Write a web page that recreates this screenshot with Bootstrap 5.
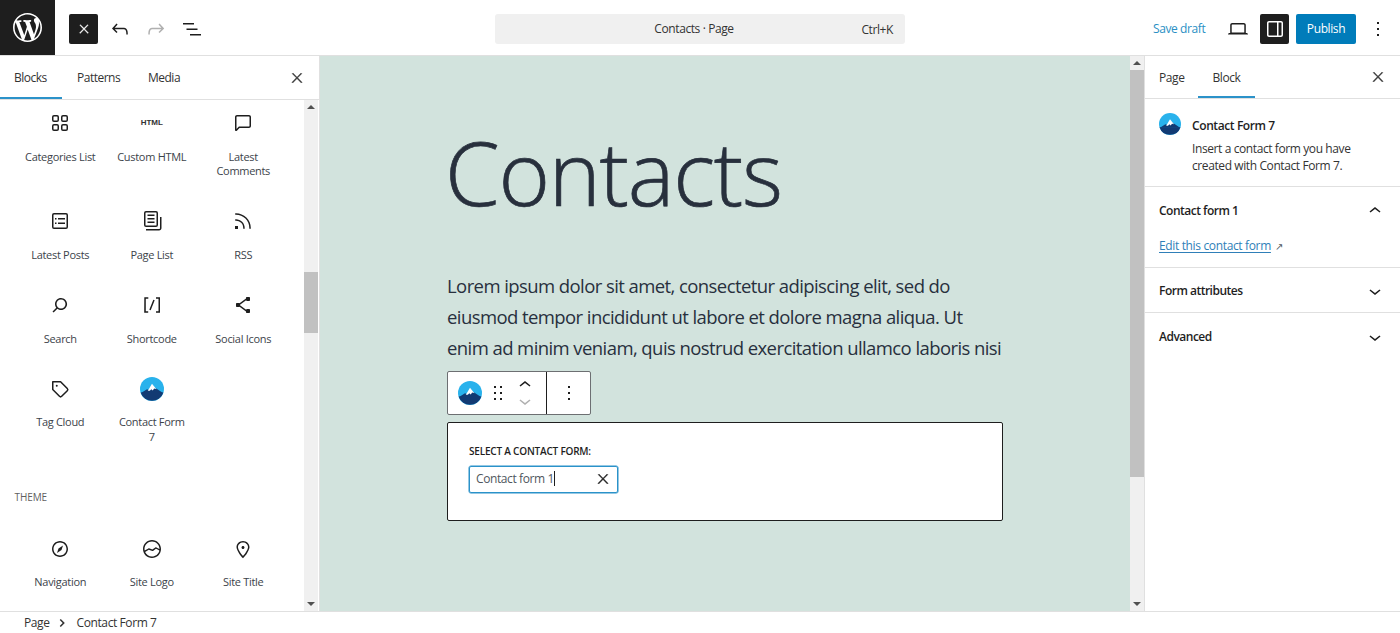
<!DOCTYPE html>
<html lang="en"><head><meta charset="utf-8"><title>Contacts</title>
<link href="https://cdn.jsdelivr.net/npm/bootstrap@5.3.0/dist/css/bootstrap.min.css" rel="stylesheet">
<style>
html,body{height:633px;overflow:hidden}
body{font-family:"Open Sans","Noto Sans",sans-serif;font-size:12px;color:#1e1e1e;background:#fff;letter-spacing:-.4px}
svg{fill:currentColor;display:block;flex:none}
#i-x{stroke:currentColor;stroke-width:.7}
.wp-shell{height:633px}
.wp-top{height:56px;border-bottom:1px solid #e0e0e0;flex:none}
.wp-logo{width:55px;height:55px;background:#1e1e1e;color:#fff}
.wp-dark{width:29px;height:30px;background:#1e1e1e;color:#fff;border-radius:2px}
.wp-left-tools{width:440px;padding-left:14px;margin-top:13.5px}
.wp-ic{width:36px;height:30px;color:#1e1e1e}
.wp-ic-off{color:#b0b0b0}
.wp-search{width:410px;height:30px;background:#f0f0f0;border-radius:3px;position:relative;color:#333;margin-top:13.5px}
.wp-search-title{flex:1;text-align:center;padding-right:12px}
.wp-kbd{position:absolute;right:12px;top:7px}
.wp-right-tools{margin-left:auto;padding-right:10px;margin-top:13.5px}
.wp-save{color:#2a8fc4;width:53px;margin-right:20px;white-space:nowrap}
.wp-lap{margin-right:10px}
.wp-pub{width:60px;height:30px;background:#007cba;color:#fff;border-radius:2px;margin-left:7px}
.wp-more{margin-left:10px}
.wp-main{flex:1;min-height:0}
.wp-left{width:320px;border-right:1px solid #e0e0e0;flex:none}
.wp-tabs{height:44px;border-bottom:1px solid #e0e0e0;flex:none;position:relative;color:#333;letter-spacing:-.5px}
.wp-tab{padding:0 0 0 14px;height:43px}
.wp-tab-on{box-shadow:inset 0 -2px 0 #2b92c9;width:62px}
.wp-tab-p{padding-left:15px;width:71px}
.wp-tab-m{padding-left:15px}
.wp-tabx{margin-left:auto;margin-right:14px;height:43px}
.wp-scrollwrap{flex:1;min-height:0}
.wp-ins{flex:1;min-width:0;overflow:hidden;padding:11px 0 0 14.5px}
.wp-grid{display:grid;grid-template-columns:repeat(3,91.5px);row-gap:30.5px}
.wp-tile{text-align:center;color:#3c434a;line-height:14.7px;padding:0 10px;font-size:11px;letter-spacing:-.3px}
.wp-tile-i{height:24px;margin-bottom:14.5px;color:#1e1e1e}
.wp-html{font-family:"Liberation Sans",sans-serif;font-weight:700;font-size:8px;letter-spacing:0;color:#333}
.wp-theme{font-size:10px;font-weight:500;color:#5f5f5f;margin:45px 0 33px;letter-spacing:-.1px;line-height:14px}
.wp-sb{width:14px;background:#f0f0f0;flex:none;margin-right:1px}
.wp-sb-r{margin-right:0}
.wp-arrow{height:14px;flex:none}
.wp-up{border:0 solid transparent;border-width:0 4px 4px;border-bottom-color:#505050;width:0;height:0}
.wp-down{border:0 solid transparent;border-width:4px 4px 0;border-top-color:#505050;width:0;height:0}
.wp-thumb{background:#c1c1c1}
.wp-thumb-l{height:61px;margin-top:158px}
.wp-thumb-r{height:407px}
.wp-canvas{flex:1;background:#d2e3dd;padding:0 0 0 127px;color:#28303d;overflow:hidden;min-width:0}
.wp-h{font-size:88px;font-weight:300;line-height:125px;margin:54px 0 0 -2px;letter-spacing:-1.2px;-webkit-text-stroke:.7px #28303d}
.wp-p{font-size:18.5px;line-height:31.2px;margin:35px 0 0;width:556px;letter-spacing:-.58px}
.wp-toolbar{width:144px;height:44px;background:#fff;border:1px solid #6d6f72;border-radius:2px;margin-top:7px;color:#1e1e1e}
.wp-tb-a{width:99px;border-right:1px solid #1e1e1e;height:100%;padding-left:10px}
.wp-drag{margin-left:4px}
.wp-tb-b{flex:1}
.wp-mover{width:24px;margin-left:3px}
.wp-mdown{margin-top:-4px}
.wp-form{width:556px;height:99px;background:#fff;border:1px solid #1e1e1e;border-radius:2px;margin-top:7px;padding:21px 21px 0;color:#1e1e1e}
.wp-form-l{font-size:10px;font-weight:600;text-transform:uppercase;line-height:15px;margin-bottom:7px;letter-spacing:-.2px}
.wp-input{width:149px;height:27px;border:1px solid #2b92c9;box-shadow:0 0 0 .5px #2b92c9;border-radius:2px;padding:0 6px;color:#50575e}
.wp-caret{display:inline-block;width:1px;height:15px;background:#1e1e1e;vertical-align:-3px}
.wp-input svg{margin-left:auto;color:#1e1e1e}
.wp-right{flex:none;width:256px;border-left:1px solid #e0e0e0}
.wp-rtabs{height:43px;border-bottom:1px solid #e0e0e0;color:#333}
.wp-rt1{padding:1px 0 0 14px;width:53px;height:42px}
.wp-rt2{width:57px;height:42px;padding-top:1px;justify-content:center;box-shadow:inset 0 -2px 0 #2b92c9}
.wp-rx{margin-right:14px;height:42px}
.wp-card{height:88px;border-bottom:1px solid #e0e0e0;padding:14px 14px 0;gap:11px}
.wp-card-t{font-weight:600;line-height:18px;color:#1e1e1e;margin-top:4px}
.wp-card-d{line-height:17px;color:#333;margin-top:5px}
.wp-pan{height:45px;padding:2px 13px 0 14px;font-weight:600;border-bottom:1px solid #e0e0e0;color:#1e1e1e;letter-spacing:-.5px}
.wp-pan-open{height:81px;display:block;padding-top:0}
.wp-pan-h{height:47px}
.wp-pan-b{margin-top:3px;letter-spacing:-.35px}
.wp-link{color:#2f7fb8;font-weight:400;text-decoration:underline;text-underline-offset:2px}
.wp-ext{font-size:10px;font-weight:400;color:#50575e;margin-left:4px}
.wp-foot{height:22px;border-top:1px solid #e0e0e0;padding-left:24px;color:#333;flex:none}
.wp-foot svg{margin:0 7px 0 4px}
</style></head>
<body>
<svg width="0" height="0" class="position-absolute"><defs>
<g id="i-cf7"><circle cx="12" cy="12" r="12" fill="#29b2ec"/><path d="M.6 15.5a12 12 0 0 0 22.8 0z" fill="#123a73"/><path d="M1 16 7 12.2 9 13 12 8 15 11 17 12 23 16z" fill="#123a73"/><path d="M7.8 13.8 12 6.8l4.4 5.4-2.2-.6-1.5 2-1.4-1.4-1.5 1.6z" fill="#fff"/></g>
<path id="i-x" d="M13 11.8l6.1-6.3-1-1-6.1 6.2-6.1-6.2-1 1 6.1 6.3-6.5 6.7 1 1 6.5-6.6 6.5 6.6 1-1z"/>
<path id="i-up" d="M6.5 12.4L12 8l5.5 4.4-.9 1.2L12 10l-4.5 3.6-1-1.2z"/>
<path id="i-down" d="M17.5 11.6L12 16l-5.5-4.4.9-1.2L12 14l4.5-3.6 1 1.2z"/>
<path id="i-more" d="M13 19h-2v-2h2v2zm0-6h-2v-2h2v2zm0-6h-2V5h2v2z"/>
</defs></svg>
<div class="wp-shell d-flex flex-column">
 <header class="wp-top d-flex align-items-start">
  <div class="wp-logo d-flex align-items-center justify-content-center"><svg width="29" height="29" viewBox="0 0 20 20"><path d="M20 10c0-5.51-4.49-10-10-10C4.48 0 0 4.49 0 10c0 5.52 4.48 10 10 10 5.51 0 10-4.48 10-10zM7.78 15.37L4.37 6.22c.55-.02 1.17-.08 1.17-.08.5-.06.44-1.13-.06-1.11 0 0-1.45.11-2.37.11-.18 0-.37 0-.58-.01C4.12 2.69 6.87 1.11 10 1.11c2.33 0 4.45.87 6.05 2.34-.68-.11-1.65.39-1.65 1.58 0 .74.45 1.36.9 2.1.35.61.55 1.36.55 2.46 0 1.49-1.4 5-1.4 5l-3.03-8.37c.54-.02.82-.17.82-.17.5-.05.44-1.25-.06-1.22 0 0-1.44.12-2.38.12-.87 0-2.33-.12-2.33-.12-.5-.03-.56 1.2-.06 1.22l.92.08 1.26 3.41zM17.41 10c.24-.64.74-1.87.43-4.25.7 1.29 1.05 2.71 1.05 4.25 0 3.29-1.73 6.24-4.4 7.78.97-2.59 1.94-5.2 2.92-7.78zM6.1 18.09C3.12 16.65 1.11 13.53 1.11 10c0-1.3.23-2.48.72-3.59C3.25 10.3 4.67 14.2 6.1 18.09zm4.03-6.63l2.58 6.98c-.86.29-1.76.45-2.71.45-.79 0-1.57-.11-2.29-.33.81-2.38 1.62-4.74 2.42-7.1z"/></svg></div>
  <div class="wp-left-tools d-flex align-items-center">
   <div class="wp-dark d-flex align-items-center justify-content-center me-1"><svg width="14" height="14" viewBox="0 0 24 24"><use href="#i-x"/></svg></div>
   <div class="wp-ic d-flex align-items-center justify-content-center"><svg width="24" height="24" viewBox="0 0 24 24"><path d="M18.3 11.7c-.6-.6-1.4-.9-2.3-.9H6.7l2.9-3.3-1.1-1-4.5 5L8.5 16l1-1-2.7-2.7H16c.5 0 .9.2 1.3.5 1 1 1 3.4 1 4.5v.3h1.5v-.2c0-1.5 0-4.3-1.5-5.7z"/></svg></div>
   <div class="wp-ic wp-ic-off d-flex align-items-center justify-content-center"><svg width="24" height="24" viewBox="0 0 24 24"><path d="M15.6 6.5l-1.1 1 2.9 3.3H8c-.9 0-1.7.3-2.3.9-1.4 1.5-1.4 4.2-1.4 5.6v.2h1.5v-.3c0-1.1 0-3.5 1-4.5.3-.3.7-.5 1.3-.5h9.2L14.5 15l1.1 1.1 4.6-4.6-4.6-5z"/></svg></div>
   <div class="wp-ic d-flex align-items-center justify-content-center"><svg width="24" height="24" viewBox="0 0 24 24"><path d="M3 6h11v1.5H3V6zm3.5 5.5h11V13h-11v-1.5zM21 17H10v1.5h11V17z"/></svg></div>
  </div>
  <div class="wp-search d-flex align-items-center"><span class="wp-search-title">Contacts · Page</span><span class="wp-kbd">Ctrl+K</span></div>
  <div class="wp-right-tools d-flex align-items-center">
   <span class="wp-save">Save draft</span>
   <div class="d-flex align-items-center justify-content-center wp-lap"><svg width="24" height="24" viewBox="0 0 24 24"><path d="M20.5 16h-.7V8c0-1.1-.9-2-2-2H6.2c-1.1 0-2 .9-2 2v8h-.7c-.8 0-1.5.7-1.5 1.5h20c0-.8-.7-1.5-1.5-1.5zM5.7 8c0-.3.2-.5.5-.5h11.6c.3 0 .5.2.5.5v7.6H5.7V8z"/></svg></div>
   <div class="wp-dark d-flex align-items-center justify-content-center"><svg width="24" height="24" viewBox="0 0 24 24"><path d="M18 4H6c-1.1 0-2 .9-2 2v12c0 1.1.9 2 2 2h12c1.1 0 2-.9 2-2V6c0-1.1-.9-2-2-2zm-4 14.5H6c-.3 0-.5-.2-.5-.5V6c0-.3.2-.5.5-.5h8v13zm4.5-.5c0 .3-.2.5-.5.5h-2.5v-13H18c.3 0 .5.2.5.5v12z"/></svg></div>
   <div class="wp-pub d-flex align-items-center justify-content-center">Publish</div>
   <svg class="wp-more" width="24" height="24" viewBox="0 0 24 24"><use href="#i-more"/></svg>
  </div>
 </header>
 <main class="wp-main d-flex">
  <aside class="wp-left d-flex flex-column">
   <div class="wp-tabs d-flex align-items-start">
    <div class="wp-tab wp-tab-on d-flex align-items-center">Blocks</div>
    <div class="wp-tab wp-tab-p d-flex align-items-center">Patterns</div>
    <div class="wp-tab wp-tab-m d-flex align-items-center">Media</div>
    <div class="wp-tabx d-flex align-items-center"><svg width="16" height="16" viewBox="0 0 24 24"><use href="#i-x"/></svg></div>
   </div>
   <div class="wp-scrollwrap d-flex">
    <div class="wp-ins">
     <div class="wp-grid">
      <div class="wp-tile"><div class="wp-tile-i d-flex justify-content-center"><svg width="24" height="24" viewBox="0 0 24 24"><path fill-rule="evenodd" d="M6 5.5h3a.5.5 0 01.5.5v3a.5.5 0 01-.5.5H6a.5.5 0 01-.5-.5V6a.5.5 0 01.5-.5zM4 6a2 2 0 012-2h3a2 2 0 012 2v3a2 2 0 01-2 2H6a2 2 0 01-2-2V6zm11-.5h3a.5.5 0 01.5.5v3a.5.5 0 01-.5.5h-3a.5.5 0 01-.5-.5V6a.5.5 0 01.5-.5zM13 6a2 2 0 012-2h3a2 2 0 012 2v3a2 2 0 01-2 2h-3a2 2 0 01-2-2V6zm5 8.5h-3a.5.5 0 00-.5.5v3a.5.5 0 00.5.5h3a.5.5 0 00.5-.5v-3a.5.5 0 00-.5-.5zM15 13a2 2 0 00-2 2v3a2 2 0 002 2h3a2 2 0 002-2v-3a2 2 0 00-2-2h-3zm-9 1.5h3a.5.5 0 01.5.5v3a.5.5 0 01-.5.5H6a.5.5 0 01-.5-.5v-3a.5.5 0 01.5-.5zM4 15a2 2 0 012-2h3a2 2 0 012 2v3a2 2 0 01-2 2H6a2 2 0 01-2-2v-3z"/></svg></div><div class="text-nowrap">Categories List</div></div>
      <div class="wp-tile"><div class="wp-tile-i d-flex justify-content-center align-items-center"><span class="wp-html">HTML</span></div><div class="text-nowrap">Custom HTML</div></div>
      <div class="wp-tile"><div class="wp-tile-i d-flex justify-content-center"><svg width="24" height="24" viewBox="0 0 24 24"><path d="M18 4H6c-1.1 0-2 .9-2 2v12.9c0 .6.5 1.1 1.1 1.1.3 0 .5-.1.8-.3L8.5 17H18c1.1 0 2-.9 2-2V6c0-1.1-.9-2-2-2zm.5 11c0 .3-.2.5-.5.5H7.9l-2.4 2.4V6c0-.3.2-.5.5-.5h12c.3 0 .5.2.5.5v9z"/></svg></div><div>Latest Comments</div></div>
      <div class="wp-tile"><div class="wp-tile-i d-flex justify-content-center"><svg width="24" height="24" viewBox="0 0 24 24"><path fill-rule="evenodd" d="M18 5.5H6a.5.5 0 00-.5.5v12a.5.5 0 00.5.5h12a.5.5 0 00.5-.5V6a.5.5 0 00-.5-.5zM6 4h12a2 2 0 012 2v12a2 2 0 01-2 2H6a2 2 0 01-2-2V6a2 2 0 012-2zm1 5h1.5v1.5H7V9zm1.5 4.5H7V15h1.5v-1.5zM10 9h7v1.5h-7V9zm7 4.5h-7V15h7v-1.5z"/></svg></div><div class="text-nowrap">Latest Posts</div></div>
      <div class="wp-tile"><div class="wp-tile-i d-flex justify-content-center"><svg width="24" height="24" viewBox="0 0 24 24"><path d="M14.5 5.5h-7V7h7V5.5ZM7.5 9h7v1.5h-7V9Zm7 3.5h-7V14h7v-1.5Z"/><path d="M16 2H6a2 2 0 0 0-2 2v12a2 2 0 0 0 2 2h10a2 2 0 0 0 2-2V4a2 2 0 0 0-2-2ZM6 3.5h10a.5.5 0 0 1 .5.5v12a.5.5 0 0 1-.5.5H6a.5.5 0 0 1-.5-.5V4a.5.5 0 0 1 .5-.5Z"/><path d="M20 8v11c0 .69-.31 1-.999 1H6v1.5h13.001c1.52 0 2.499-.982 2.499-2.5V8H20Z"/></svg></div><div class="text-nowrap">Page List</div></div>
      <div class="wp-tile"><div class="wp-tile-i d-flex justify-content-center"><svg width="24" height="24" viewBox="0 0 24 24"><path d="M5 10.2h-.8v1.5H5c1.9 0 3.8.8 5.1 2.1 1.4 1.4 2.1 3.2 2.1 5.1v.8h1.5V19c0-2.3-.9-4.5-2.6-6.2-1.6-1.6-3.8-2.6-6.1-2.6zm10.4-1.6C12.6 5.8 8.9 4.2 5 4.2h-.8v1.5H5c3.5 0 6.9 1.4 9.4 3.9s3.9 5.8 3.9 9.4v.8h1.5V19c0-3.9-1.6-7.6-4.4-10.4zM4 20h3v-3H4v3z"/></svg></div><div>RSS</div></div>
      <div class="wp-tile"><div class="wp-tile-i d-flex justify-content-center"><svg width="24" height="24" viewBox="0 0 24 24"><path d="M13 5c-3.3 0-6 2.7-6 6 0 1.4.5 2.7 1.3 3.7l-3.8 3.8 1.1 1.1 3.8-3.8c1 .8 2.3 1.3 3.7 1.3 3.3 0 6-2.7 6-6S16.3 5 13 5zm0 10.5c-2.5 0-4.5-2-4.5-4.5s2-4.5 4.5-4.5 4.5 2 4.5 4.5-2 4.5-4.5 4.5z"/></svg></div><div>Search</div></div>
      <div class="wp-tile"><div class="wp-tile-i d-flex justify-content-center"><svg width="24" height="24" viewBox="0 0 24 24"><path d="M16 4.2v1.5h2.5v12.5H16v1.5h4V4.2h-4zM4.2 19.8h4v-1.5H5.8V5.8h2.5V4.2h-4l-.1 15.6zm5.1-3.1l1.4.6 4-10-1.4-.6-4 10z"/></svg></div><div>Shortcode</div></div>
      <div class="wp-tile"><div class="wp-tile-i d-flex justify-content-center"><svg width="24" height="24" viewBox="0 0 24 24"><path d="M9 11.8l6.1-4.5c.1.4.4.7.9.7h2c.6 0 1-.4 1-1V5c0-.6-.4-1-1-1h-2c-.6 0-1 .4-1 1v.4l-6.4 4.8c-.2-.1-.4-.2-.6-.2H6c-.6 0-1 .4-1 1v2c0 .6.4 1 1 1h2c.2 0 .4-.1.6-.2l6.4 4.8v.4c0 .6.4 1 1 1h2c.6 0 1-.4 1-1v-2c0-.6-.4-1-1-1h-2c-.5 0-.8.3-.9.7L9 12.2v-.4z"/></svg></div><div class="text-nowrap">Social Icons</div></div>
      <div class="wp-tile"><div class="wp-tile-i d-flex justify-content-center"><svg width="24" height="24" viewBox="0 0 24 24"><path d="M4.75 4a.75.75 0 0 0-.75.75v7.826c0 .2.08.39.22.53l6.72 6.716a2.313 2.313 0 0 0 3.276-.001l5.61-5.611-.531-.53.532.528a2.315 2.315 0 0 0 0-3.264L13.104 4.22a.75.75 0 0 0-.53-.22H4.75ZM19 12.576a.815.815 0 0 1-.236.574l-5.61 5.611a.814.814 0 0 1-1.153 0L5.5 12.264V5.5h6.763l6.5 6.502a.816.816 0 0 1 .237.574ZM8.75 9.75a1 1 0 1 0 0-2 1 1 0 0 0 0 2Z"/></svg></div><div>Tag Cloud</div></div>
      <div class="wp-tile"><div class="wp-tile-i d-flex justify-content-center"><svg width="24" height="24" viewBox="0 0 24 24"><use href="#i-cf7"/></svg></div><div>Contact Form<br>7</div></div>
     </div>
     <div class="wp-theme">THEME</div>
     <div class="wp-grid">
      <div class="wp-tile"><div class="wp-tile-i d-flex justify-content-center"><svg width="24" height="24" viewBox="0 0 24 24"><path d="M12 4c-4.4 0-8 3.6-8 8s3.6 8 8 8 8-3.6 8-8-3.6-8-8-8zm0 14.5c-3.6 0-6.5-2.9-6.5-6.5S8.4 5.5 12 5.5s6.5 2.9 6.5 6.5-2.9 6.5-6.5 6.5zM9 16l4.5-3L15 8.4l-4.5 3L9 16z"/></svg></div><div>Navigation</div></div>
      <div class="wp-tile"><div class="wp-tile-i d-flex justify-content-center"><svg width="24" height="24" viewBox="0 0 24 24"><path d="M12 3c-5 0-9 4-9 9s4 9 9 9 9-4 9-9-4-9-9-9zm0 1.5c4.1 0 7.5 3.4 7.5 7.5v.1c-1.4-.8-3.3-1.7-3.4-1.8-.2-.1-.5-.1-.8.1l-2.9 2.1L9 11.3c-.2-.1-.4 0-.6.1l-3.7 2.2c-.1-.5-.2-1-.2-1.5 0-4.1 3.4-7.5 7.5-7.5zm0 15c-3.1 0-5.7-1.9-6.9-4.5l3.7-2.2 3.5 1.2c.2.1.5 0 .7-.1l2.9-2.1c.8.4 2.5 1.2 3.5 1.9-.9 3.3-3.9 5.8-7.4 5.8z"/></svg></div><div>Site Logo</div></div>
      <div class="wp-tile"><div class="wp-tile-i d-flex justify-content-center"><svg width="24" height="24" viewBox="0 0 24 24"><path d="M12 9c-.8 0-1.5.7-1.5 1.5S11.2 12 12 12s1.5-.7 1.5-1.5S12.8 9 12 9zm0-5c-3.6 0-6.5 2.8-6.5 6.2 0 .8.3 1.8.9 3.1.5 1.1 1.2 2.3 2 3.6.7 1 3 3.8 3.2 3.9l.4.5.4-.5c.2-.2 2.6-2.9 3.2-3.9.8-1.2 1.5-2.5 2-3.6.6-1.3.9-2.3.9-3.1C18.5 6.8 15.6 4 12 4zm4.3 8.7c-.5 1-1.1 2.2-1.9 3.4-.5.7-1.7 2.2-2.4 3-.7-.8-1.9-2.3-2.4-3-.8-1.2-1.4-2.3-1.9-3.3-.6-1.4-.7-2.2-.7-2.5 0-2.6 2.2-4.7 5-4.7s5 2.1 5 4.7c0 .2-.1 1-.7 2.4z"/></svg></div><div>Site Title</div></div>
     </div>
    </div>
    <div class="wp-sb d-flex flex-column">
     <div class="wp-arrow d-flex align-items-center justify-content-center"><span class="wp-up"></span></div>
     <div class="wp-thumb wp-thumb-l"></div>
     <div class="flex-grow-1"></div>
     <div class="wp-arrow d-flex align-items-center justify-content-center"><span class="wp-down"></span></div>
    </div>
   </div>
  </aside>
  <section class="wp-canvas">
   <h1 class="wp-h">Contacts</h1>
   <p class="wp-p">Lorem ipsum dolor sit amet, consectetur adipiscing elit, sed do eiusmod tempor incididunt ut labore et dolore magna aliqua. Ut enim ad minim veniam, quis nostrud exercitation ullamco laboris nisi</p>
   <div class="wp-toolbar d-flex">
    <div class="wp-tb-a d-flex align-items-center">
     <svg width="24" height="24" viewBox="0 0 24 24"><use href="#i-cf7"/></svg>
     <svg class="wp-drag" width="24" height="24" viewBox="0 0 24 24"><path d="M8 7h2V5H8v2zm0 6h2v-2H8v2zm0 6h2v-2H8v2zm6-14v2h2V5h-2zm0 8h2v-2h-2v2zm0 6h2v-2h-2v2z"/></svg>
     <div class="wp-mover d-flex flex-column"><svg width="24" height="20" viewBox="0 2 24 20"><use href="#i-up"/></svg><svg class="wp-ic-off wp-mdown" width="24" height="20" viewBox="0 2 24 20"><use href="#i-down"/></svg></div>
    </div>
    <div class="wp-tb-b d-flex align-items-center justify-content-center"><svg width="24" height="24" viewBox="0 0 24 24"><use href="#i-more"/></svg></div>
   </div>
   <div class="wp-form">
    <div class="wp-form-l">Select a contact form:</div>
    <div class="wp-input d-flex align-items-center"><span>Contact form 1<span class="wp-caret"></span></span><svg width="16" height="16" viewBox="0 0 24 24"><use href="#i-x"/></svg></div>
   </div>
  </section>
  <div class="wp-sb wp-sb-r d-flex flex-column">
   <div class="wp-arrow d-flex align-items-center justify-content-center"><span class="wp-up"></span></div>
   <div class="wp-thumb wp-thumb-r"></div>
   <div class="flex-grow-1"></div>
   <div class="wp-arrow d-flex align-items-center justify-content-center"><span class="wp-down"></span></div>
  </div>
  <aside class="wp-right">
   <div class="wp-rtabs d-flex align-items-start">
    <div class="wp-rt1 d-flex align-items-center">Page</div>
    <div class="wp-rt2 d-flex align-items-center">Block</div>
    <div class="wp-rx ms-auto d-flex align-items-center"><svg width="16" height="16" viewBox="0 0 24 24"><use href="#i-x"/></svg></div>
   </div>
   <div class="wp-card d-flex">
    <svg width="22" height="22" viewBox="0 0 24 24"><use href="#i-cf7"/></svg>
    <div><div class="wp-card-t">Contact Form 7</div><div class="wp-card-d">Insert a contact form you have<br>created with Contact Form 7.</div></div>
   </div>
   <div class="wp-pan wp-pan-open">
    <div class="wp-pan-h d-flex align-items-center justify-content-between"><span>Contact form 1</span><svg width="24" height="24" viewBox="0 0 24 24"><use href="#i-up"/></svg></div>
    <div class="wp-pan-b"><a class="wp-link" href="#">Edit this contact form</a><span class="wp-ext">↗</span></div>
   </div>
   <div class="wp-pan d-flex align-items-center justify-content-between"><span>Form attributes</span><svg width="24" height="24" viewBox="0 0 24 24"><use href="#i-down"/></svg></div>
   <div class="wp-pan d-flex align-items-center justify-content-between border-0"><span>Advanced</span><svg width="24" height="24" viewBox="0 0 24 24"><use href="#i-down"/></svg></div>
  </aside>
 </main>
 <footer class="wp-foot d-flex align-items-center"><span>Page</span><svg width="16" height="16" viewBox="0 0 24 24"><path d="M10.2 6 8.6 7.4l4.4 4.6-4.4 4.6 1.6 1.4 6-6z"/></svg><span>Contact Form 7</span></footer>
</div>
</body></html>
